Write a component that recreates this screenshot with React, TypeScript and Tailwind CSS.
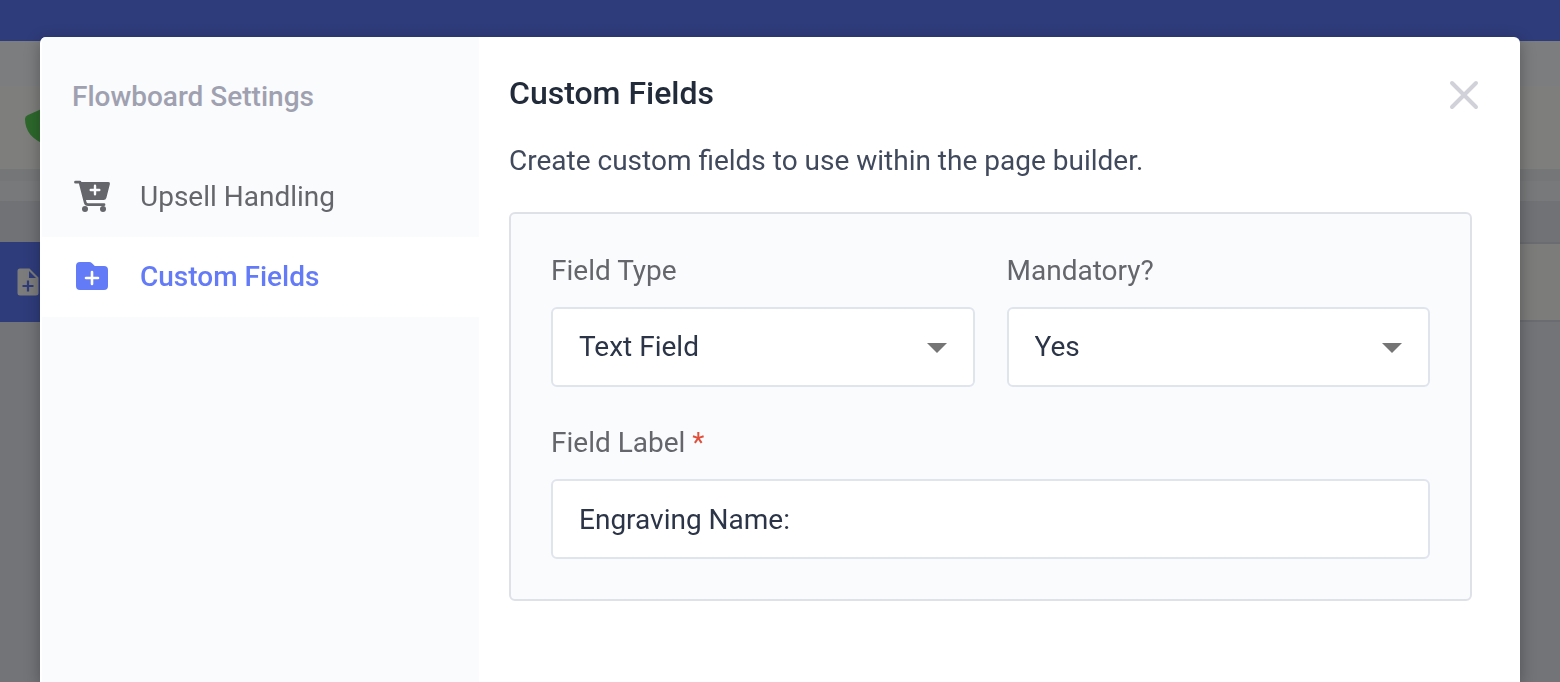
import type { ReactNode } from "react";

function CartPlusIcon() {
  return (
    <svg viewBox="0 0 40 40" className="size-10 shrink-0" fill="none" aria-hidden="true">
      <path
        d="M3.500 5.200H8l5.200 20.300a3 3 0 0 0 2.900 2.200H32"
        stroke="currentColor"
        strokeWidth="2.800"
        strokeLinecap="round"
        strokeLinejoin="round"
      />
      <path
        d="M8 5h28.300a1.700 1.700 0 0 1 1.600 2.100l-3.500 13.600a3 3 0 0 1-2.900 2.300H12.600z"
        fill="currentColor"
      />
      <path d="M23 8.700v8.600M18.700 13h8.600" stroke="#fafbfd" strokeWidth="2.400" strokeLinecap="round" />
      <circle cx="13" cy="32" r="3" fill="currentColor" />
      <circle cx="31" cy="32" r="3" fill="currentColor" />
    </svg>
  );
}

function FolderPlusIcon() {
  return (
    <svg viewBox="0 0 40 40" className="size-10 shrink-0" fill="none" aria-hidden="true">
      <path
        d="M8 5h9.200a4 4 0 0 1 2.800 1.200L22.800 9H32a4 4 0 0 1 4 4v16a4 4 0 0 1-4 4H8a4 4 0 0 1-4-4V9a4 4 0 0 1 4-4z"
        fill="currentColor"
      />
      <path d="M20 15v12M14 21h12" stroke="#fff" strokeWidth="2.600" strokeLinecap="round" />
    </svg>
  );
}

function Backdrop() {
  return (
    <div aria-hidden="true" className="flex min-h-screen flex-col bg-[#727478]">
      <div className="h-[41px] bg-[#2f3c7b]" />
      <div className="h-[45px] bg-[#7b7d7f]" />
      <div className="flex h-[83px] items-center bg-[#7e7e7d] pl-6">
        <svg viewBox="0 0 44 44" className="size-11" fill="#2d682c">
          <path d="M22 1 3.500 9.200A4 4 0 0 0 1 13c0 12 7 20.500 21 26 14-5.500 21-14 21-26a4 4 0 0 0-2.500-3.800z" />
        </svg>
      </div>
      <div className="h-3 bg-[#747678]" />
      <div className="h-5 bg-[#77797a]" />
      <div className="h-[41px] bg-[#707276]" />
      <div className="flex h-20">
        <div className="flex w-20 items-center bg-[#2f3c7b] pl-4">
          <svg viewBox="0 0 24 28" className="h-7 w-6" fill="none">
            <path
              d="M4 .5h9.500L22.500 9.500V25a2.500 2.500 0 0 1-2.500 2.500H4A2.500 2.500 0 0 1 1.500 25V3A2.500 2.500 0 0 1 4 .5z"
              fill="#7c7c7c"
            />
            <path d="M13 3v7h7z" fill="#2f3c7b" />
            <path d="M12 12.500v11M6.500 18h11" stroke="#2f3c7b" strokeWidth="2.200" />
          </svg>
        </div>
        <div className="flex-1 border-y-2 border-[#6a6c71] bg-[#7c7c7b]" />
      </div>
    </div>
  );
}

function NavItem({ icon, label, active }: { icon: ReactNode; label: string; active?: boolean }) {
  const tone = active ? "bg-white font-medium text-[#647bf8]" : "text-[#65666b]";
  return (
    <li>
      <button
        type="button"
        aria-current={active ? "page" : undefined}
        className={`flex h-20 w-full items-center gap-7 pl-[30px] text-left ${tone}`}
      >
        {icon}
        <span>{label}</span>
      </button>
    </li>
  );
}

const control =
  "h-20 w-full appearance-none rounded-md border-2 border-[#e0e4ed] bg-white px-[26px] text-[#2c3548] outline-none";

function SelectField({ id, label, options }: { id: string; label: string; options: string[] }) {
  return (
    <div className="flex flex-col gap-5">
      <label htmlFor={id}>{label}</label>
      <div className="relative">
        <select id={id} className={control}>
          {options.map((option) => (
            <option key={option}>{option}</option>
          ))}
        </select>
        <svg
          viewBox="0 0 20 10"
          className="pointer-events-none absolute top-9 right-7 h-2.5 w-5"
          fill="#757575"
          aria-hidden="true"
        >
          <path d="M0 0h20L10 10z" />
        </svg>
      </div>
    </div>
  );
}

export default function App() {
  return (
    <div className="font-[Roboto,sans-serif] text-[28px] leading-8">
      <Backdrop />
      <div
        role="dialog"
        aria-labelledby="dialog-title"
        className="fixed inset-x-10 top-[37px] bottom-0 flex overflow-hidden rounded-t-md bg-white pl-0.5 shadow-[0_4px_16px_rgba(0,0,0,0.3)]"
      >
        <nav aria-label="Flowboard Settings" className="w-[437px] shrink-0 bg-[#fafbfd] pt-11">
          <h2 className="pl-[30px] font-medium text-[#a0a1b0]">Flowboard Settings</h2>
          <ul className="mt-11">
            <NavItem icon={<CartPlusIcon />} label="Upsell Handling" />
            <NavItem icon={<FolderPlusIcon />} label="Custom Fields" active />
          </ul>
        </nav>
        <main className="min-w-0 flex-1 overflow-hidden pt-9 pr-12 pl-[30px]">
          <header className="flex items-end justify-between">
            <h1 id="dialog-title" className="text-[32px] leading-10 font-medium text-[#222b3a]">
              Custom Fields
            </h1>
            <button type="button" aria-label="Close" className="-mr-2.5 p-0.5 text-[#d1d2d9]">
              <svg viewBox="0 0 32 32" className="size-8" fill="none" aria-hidden="true">
                <path
                  d="M4 4l24 24M28 4 4 28"
                  stroke="currentColor"
                  strokeWidth="4"
                  strokeLinecap="round"
                />
              </svg>
            </button>
          </header>
          <p className="mt-8 text-[#414a5d]">Create custom fields to use within the page builder.</p>
          <form className="mt-[35px] flex flex-col gap-10 rounded-md border-2 border-[#dee1e8] bg-[#fafbfd] px-10 pt-[41px] pb-10 text-[#65666b]">
            <div className="grid grid-cols-2 gap-8">
              <SelectField id="field-type" label="Field Type" options={["Text Field"]} />
              <SelectField id="mandatory" label="Mandatory?" options={["Yes", "No"]} />
            </div>
            <div className="flex flex-col gap-5">
              <label htmlFor="field-label">
                Field Label <span className="text-[#e04f3a]">*</span>
              </label>
              <input id="field-label" type="text" required defaultValue="Engraving Name:" className={control} />
            </div>
          </form>
        </main>
      </div>
    </div>
  );
}
